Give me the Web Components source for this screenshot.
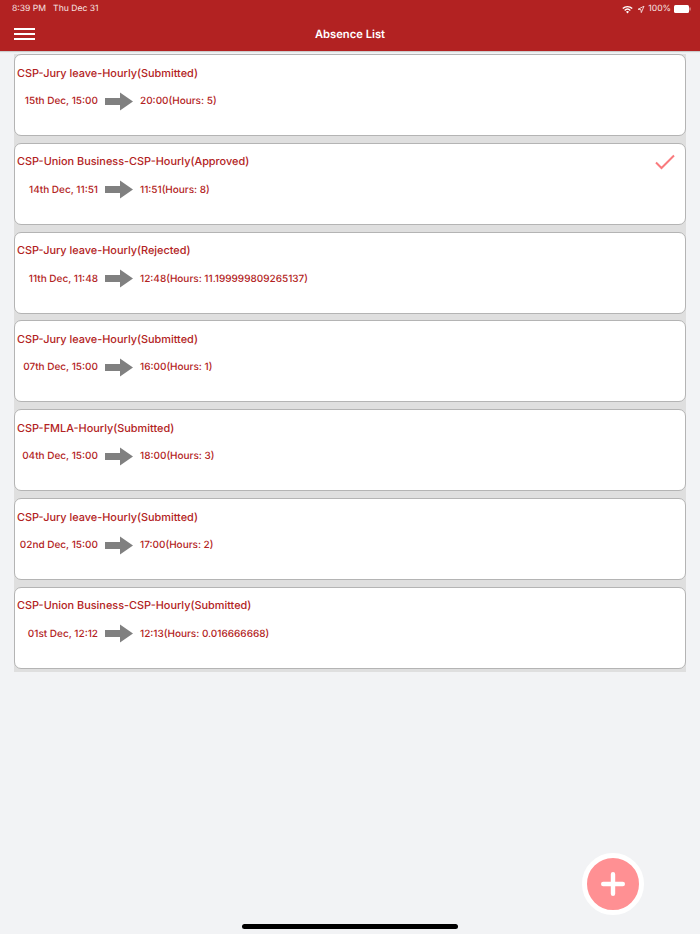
<html>
<head>
  <title>Absence List</title>
  <style>
    html, body { margin: 0; padding: 0; height: 100%; }
    body { background: #f2f3f5; font-family: Inter, "Liberation Sans", sans-serif; text-rendering: geometricPrecision; }
  </style>

  <template id="appHeader.tpl">
    <style>
      :host { display: block; background: #b22222; color: #fff; height: 51px; box-shadow: 0 1px 1px #ccc; }
      .status {
        height: 17px; padding: 1px 9px 0 12px; box-sizing: border-box; display: flex; align-items: center;
        font-size: 8.6px; color: #f7e4e4; gap: 7px;
      }
      .status .right { margin-left: auto; display: flex; align-items: center; gap: 3px; }
      .bar { height: 34px; display: flex; align-items: center; justify-content: center; position: relative; }
      .bar h1 { margin: 0; font-size: 11.2px; font-weight: 600; }
      .menu { position: absolute; left: 14px; top: 11px; width: 21px; display: flex; flex-direction: column; gap: 3.5px; }
      .menu i { display: block; height: 1.5px; background: #fff; }
    </style>
    <div class="status">
      <span>8:39 PM</span><span>Thu Dec 31</span>
      <div class="right">
        <svg width="11" height="9" viewBox="0 0 11 9"><path d="M0.3 3 A7.5 7.5 0 0 1 10.7 3 L9.7 4 A6 6 0 0 0 1.3 4 Z M2.2 4.9 A4.8 4.8 0 0 1 8.8 4.9 L7.8 5.9 A3.3 3.3 0 0 0 3.2 5.9 Z M4 6.7 A2.2 2.2 0 0 1 7 6.7 L5.5 8.4 Z" fill="#fff"/></svg>
        <svg width="8" height="9" viewBox="0 0 8 9" style="margin-left:1px"><path d="M7 1.2 L1 4.3 L3.9 4.6 L4.3 7.6 Z" fill="none" stroke="#f5dede" stroke-width="0.9"/></svg>
        <span>100%</span>
        <svg width="17" height="8" viewBox="0 0 17 8"><rect x="0" y="0" width="15" height="8" rx="1.5" fill="#fff"/><rect x="15.5" y="2.5" width="1" height="3" fill="#e8bcbc"/></svg>
      </div>
    </div>
    <div class="bar">
      <div class="menu"><i></i><i></i><i></i></div>
      <h1><slot></slot></h1>
    </div>
  </template>

  <template id="absenceCard.tpl">
    <style>
      :host {
        display: block; position: relative; box-sizing: border-box; height: 82px;
        background: #fff; border: 1px solid #b4b4b4; border-radius: 7px; color: #b22222;
      }
      .title { margin: 10.5px 0 0 2px; font-size: 10.9px; font-weight: 500; line-height: 14px; }
      .row { display: flex; align-items: center; margin-top: 10.5px; height: 22px; font-size: 10px; font-weight: 500; }
      .from { width: 83px; text-align: right; white-space: nowrap; }
      svg.arrow { margin: 0 7px; flex: none; }
      .check { position: absolute; right: 10px; top: 10px; display: none; }
      :host([approved]) .check { display: block; }
    </style>
    <div class="title"><slot name="title"></slot></div>
    <div class="row">
      <div class="from"><slot name="from"></slot></div>
      <svg class="arrow" width="28" height="19" viewBox="0 0 28 19"><path d="M0 6 H15 V0.5 L28 9.5 L15 18.5 V13 H0 Z" fill="#808080"/></svg>
      <div><slot name="to"></slot></div>
    </div>
    <svg class="check" width="20" height="16" viewBox="0 0 20 16"><path d="M1 8.5 L6.5 14 L19 1.5" fill="none" stroke="#f97a7d" stroke-width="2"/></svg>
  </template>

  <template id="absenceList.tpl">
    <style>
      :host { display: flex; flex-direction: column; gap: 6.84px; margin: 3px 14px 0; padding-bottom: 3px; background: #dfdfdf; }
    </style>
    <slot></slot>
  </template>

  <template id="addButton.tpl">
    <style>
      :host {
        display: flex; align-items: center; justify-content: center; position: absolute; left: 582px; top: 853px;
        box-sizing: border-box; width: 62px; height: 62px; border-radius: 50%; background: #ff9093; border: 5px solid #fff;
      }
    </style>
    <svg width="26" height="26" viewBox="0 0 26 26"><path d="M13 3.2 V22.8 M3.2 13 H22.8" stroke="#fff" stroke-width="4.4" stroke-linecap="round"/></svg>
  </template>

  <template id="homeBar.tpl">
    <style>
      :host { display: block; position: absolute; left: 242px; top: 924px; width: 216px; height: 5px; border-radius: 3px; background: #000; }
    </style>
  </template>

  <script>
    function shadowFrom(el, id) {
      const shadow = el.attachShadow({ mode: 'open' });
      shadow.appendChild(document.getElementById(id).content.cloneNode(true));
      return shadow;
    }

    class AppHeader extends HTMLElement {
      constructor() { super(); shadowFrom(this, 'appHeader.tpl'); }
    }
    class AbsenceCard extends HTMLElement {
      constructor() { super(); shadowFrom(this, 'absenceCard.tpl'); }
    }
    class AbsenceList extends HTMLElement {
      constructor() { super(); shadowFrom(this, 'absenceList.tpl'); }
    }
    class AddButton extends HTMLElement {
      constructor() { super(); shadowFrom(this, 'addButton.tpl'); }
    }
    class HomeBar extends HTMLElement {
      constructor() { super(); shadowFrom(this, 'homeBar.tpl'); }
    }

    window.customElements.define('app-header', AppHeader);
    window.customElements.define('absence-card', AbsenceCard);
    window.customElements.define('absence-list', AbsenceList);
    window.customElements.define('add-button', AddButton);
    window.customElements.define('home-bar', HomeBar);
  </script>
</head>

<body>
  <app-header>Absence List</app-header>
  <absence-list>
    <absence-card>
      <span slot="title">CSP-Jury leave-Hourly(Submitted)</span>
      <span slot="from">15th Dec, 15:00</span>
      <span slot="to">20:00(Hours: 5)</span>
    </absence-card>
    <absence-card approved>
      <span slot="title">CSP-Union Business-CSP-Hourly(Approved)</span>
      <span slot="from">14th Dec, 11:51</span>
      <span slot="to">11:51(Hours: 8)</span>
    </absence-card>
    <absence-card>
      <span slot="title">CSP-Jury leave-Hourly(Rejected)</span>
      <span slot="from">11th Dec, 11:48</span>
      <span slot="to">12:48(Hours: 11.199999809265137)</span>
    </absence-card>
    <absence-card>
      <span slot="title">CSP-Jury leave-Hourly(Submitted)</span>
      <span slot="from">07th Dec, 15:00</span>
      <span slot="to">16:00(Hours: 1)</span>
    </absence-card>
    <absence-card>
      <span slot="title">CSP-FMLA-Hourly(Submitted)</span>
      <span slot="from">04th Dec, 15:00</span>
      <span slot="to">18:00(Hours: 3)</span>
    </absence-card>
    <absence-card>
      <span slot="title">CSP-Jury leave-Hourly(Submitted)</span>
      <span slot="from">02nd Dec, 15:00</span>
      <span slot="to">17:00(Hours: 2)</span>
    </absence-card>
    <absence-card>
      <span slot="title">CSP-Union Business-CSP-Hourly(Submitted)</span>
      <span slot="from">01st Dec, 12:12</span>
      <span slot="to">12:13(Hours: 0.016666668)</span>
    </absence-card>
  </absence-list>
  <add-button></add-button>
  <home-bar></home-bar>
</body>
</html>
